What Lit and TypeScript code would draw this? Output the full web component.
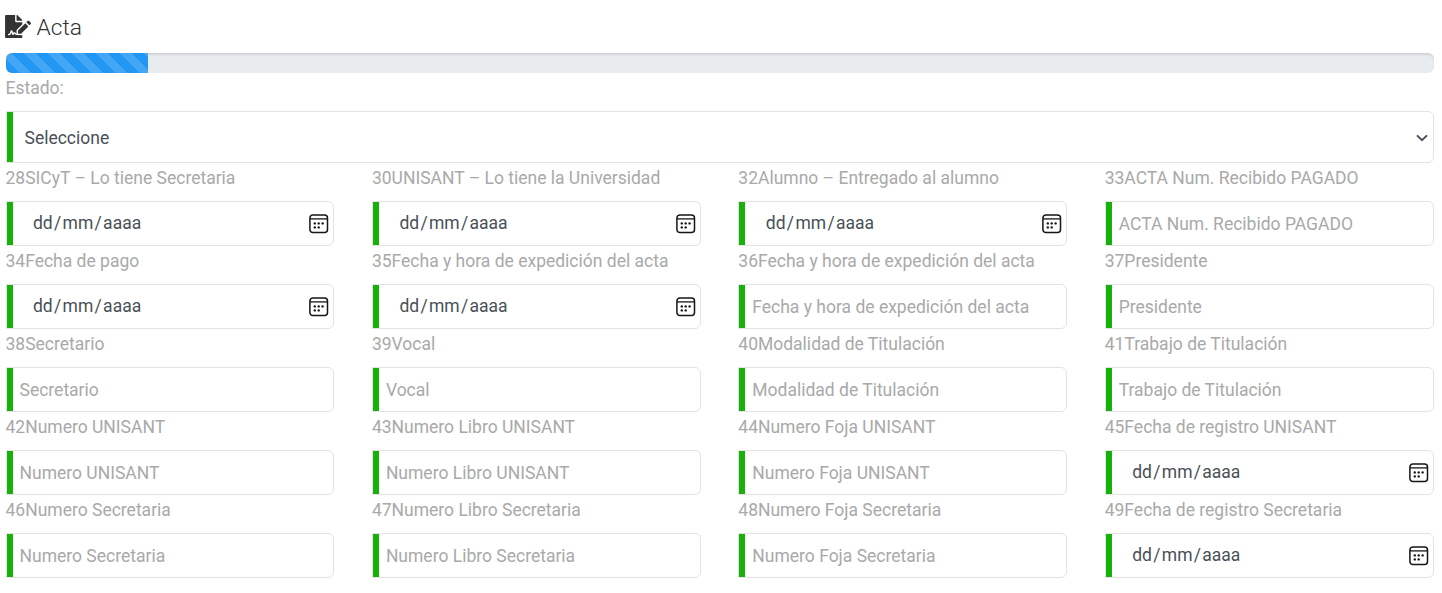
import { LitElement, html, css } from "lit";
import { customElement, property } from "lit/decorators.js";

interface Field {
  label: string;
  placeholder?: string;
}

// A field without a placeholder is a date picker.
const FIELDS: Field[] = [
  { label: "28SICyT – Lo tiene Secretaria" },
  { label: "30UNISANT – Lo tiene la Universidad" },
  { label: "32Alumno – Entregado al alumno" },
  { label: "33ACTA Num. Recibido PAGADO", placeholder: "ACTA Num. Recibido PAGADO" },
  { label: "34Fecha de pago" },
  { label: "35Fecha y hora de expedición del acta" },
  { label: "36Fecha y hora de expedición del acta", placeholder: "Fecha y hora de expedición del acta" },
  { label: "37Presidente", placeholder: "Presidente" },
  { label: "38Secretario", placeholder: "Secretario" },
  { label: "39Vocal", placeholder: "Vocal" },
  { label: "40Modalidad de Titulación", placeholder: "Modalidad de Titulación" },
  { label: "41Trabajo de Titulación", placeholder: "Trabajo de Titulación" },
  { label: "42Numero UNISANT", placeholder: "Numero UNISANT" },
  { label: "43Numero Libro UNISANT", placeholder: "Numero Libro UNISANT" },
  { label: "44Numero Foja UNISANT", placeholder: "Numero Foja UNISANT" },
  { label: "45Fecha de registro UNISANT" },
  { label: "46Numero Secretaria", placeholder: "Numero Secretaria" },
  { label: "47Numero Libro Secretaria", placeholder: "Numero Libro Secretaria" },
  { label: "48Numero Foja Secretaria", placeholder: "Numero Foja Secretaria" },
  { label: "49Fecha de registro Secretaria" },
];

@customElement("acta-field")
export class ActaField extends LitElement {
  @property() label = "";
  @property() placeholder = "";

  static styles = css`
    :host { display: block; min-width: 0; }
    .label { height: 30px; line-height: 30px; margin-bottom: 8px; color: #a9a9a9; white-space: nowrap; }
    .control {
      box-sizing: border-box;
      display: flex;
      align-items: center;
      height: 45px;
      border: 1px solid #e3e3e3;
      border-radius: 0 6px 6px 0;
      background: #fff;
    }
    .bar { align-self: stretch; width: 6px; background: #18b10c; }
    .input {
      flex: 1;
      min-width: 0;
      height: 43px;
      box-sizing: border-box;
      border: 0;
      outline: 0;
      padding: 1px 7px 0;
      background: transparent;
      font: inherit;
      color: #495057;
    }
    .input::placeholder { color: #a9a9a9; opacity: 1; }
    .date { display: flex; flex: 1; padding-left: 20.5px; color: #495057; line-height: 42px; height: 43px; }
    .sep { padding: 0 1.3px; }
    .calendar { width: 20px; height: 20px; margin: 0 4.1px 0 0; }
  `;

  render() {
    return html`
      <div class="label">${this.label}</div>
      <div class="control">
        <span class="bar"></span>
        ${this.placeholder
          ? html`<input class="input" type="text" placeholder=${this.placeholder} />`
          : html`
              <span class="date"><span>dd</span><span class="sep">/</span><span>mm</span><span class="sep">/</span><span>aaaa</span></span>
              <svg class="calendar" viewBox="0 0 20 20" fill="none" stroke="#161616">
                <rect x="0.9" y="0.9" width="17.6" height="17.6" rx="3" stroke-width="1.5" />
                <path d="M1 4.9h17.6" stroke-width="1.3" />
                <g fill="#161616" stroke="none">
                  <circle cx="5.8" cy="9.4" r="1.2" /><circle cx="9.7" cy="9.4" r="1.2" /><circle cx="13.6" cy="9.4" r="1.2" />
                  <circle cx="5.8" cy="13.4" r="1.2" /><circle cx="9.7" cy="13.4" r="1.2" />
                </g>
              </svg>`}
      </div>
    `;
  }
}

@customElement("app-root")
export class AppRoot extends LitElement {
  static styles = css`
    :host {
      display: block;
      box-sizing: border-box;
      height: 593px;
      padding: 12px 8.4px 0 5.5px;
      background: #fff;
      font: 17.5px/30px Roboto, sans-serif;
      color: #a9a9a9;
    }
    .title { display: flex; align-items: center; gap: 5.4px; height: 30px; margin: 0 0 11px -0.4px; color: #333; font-size: 22.75px; font-weight: 300; }
    .name { padding-top: 1px; }
    .sign { width: 26px; height: 23px; margin-bottom: 1px; }
    .progress { height: 20px; overflow: hidden; border-radius: 6px; background: #e9ecef; box-shadow: inset 0 2px 2px rgba(0, 0, 0, 0.1); }
    .done {
      height: 20px;
      background: #2196f3 linear-gradient(45deg, rgba(255, 255, 255, 0.15) 25%, transparent 25%, transparent 50%, rgba(255, 255, 255, 0.15) 50%, rgba(255, 255, 255, 0.15) 75%, transparent 75%, transparent) -6px 0 / 24px 24px;
    }
    .label { height: 30px; margin-bottom: 8px; }
    .select {
      box-sizing: border-box;
      display: flex;
      align-items: center;
      height: 52px;
      border: 1px solid #e3e3e3;
      border-radius: 0 6px 6px 0;
      color: #495057;
    }
    .bar { align-self: stretch; width: 6px; background: #18b10c; }
    .value { flex: 1; padding: 2px 0 0 12px; }
    .chevron { width: 12px; height: 8px; margin: 1px 5px 0 0; }
    .grid { display: grid; grid-template-columns: repeat(4, 1fr); column-gap: 37.5px; }
  `;

  private progress = 9.95;

  render() {
    return html`
      <div class="title">
        <svg class="sign" viewBox="0 0 576 512" fill="#333">
          <path d="M218.17 424.14c-2.95-5.92-8.09-6.52-10.17-6.52s-7.22.59-10.02 6.19l-7.67 15.34c-6.37 12.78-25.03 11.37-29.48-2.09L144 386.59l-10.61 31.88c-5.89 17.66-22.38 29.53-41 29.53H80c-8.84 0-16-7.16-16-16s7.16-16 16-16h12.39c4.83 0 9.11-3.08 10.64-7.66l18.19-54.64c3.3-9.81 12.44-16.41 22.78-16.41s19.48 6.59 22.77 16.41l13.88 41.64c19.75-16.19 54.06-9.7 66 14.16 1.89 3.78 5.49 5.95 9.36 6.26v-82.12l128-127.09V160H248c-13.2 0-24-10.8-24-24V0H24C10.7 0 0 10.7 0 24v464c0 13.3 10.7 24 24 24h336c13.3 0 24-10.7 24-24v-40l-128-.11c-16.12-.31-30.58-9.28-37.83-23.75zM384 121.9c0-6.3-2.5-12.4-7-16.9L279.1 7c-4.5-4.5-10.6-7-17-7H256v128h128v-6.1zm-96 225.06V416h68.99l161.68-162.78-67.88-67.88L288 346.96zm280.54-179.63l-31.87-31.87c-9.94-9.94-26.07-9.94-36.01 0l-27.25 27.25 67.88 67.88 27.25-27.25c9.95-9.94 9.95-26.07 0-36.01z" />
        </svg>
        <span class="name">Acta</span>
      </div>
      <div class="progress"><div class="done" style="width:${this.progress}%"></div></div>
      <div class="label">Estado:</div>
      <div class="select">
        <span class="bar"></span>
        <span class="value">Seleccione</span>
        <svg class="chevron" viewBox="0 0 12 8" fill="none" stroke="#495057" stroke-width="2"><path d="M1 1.4l5 4.8 5-4.8" /></svg>
      </div>
      <div class="grid">
        ${FIELDS.map((f) => html`<acta-field .label=${f.label} .placeholder=${f.placeholder ?? ""}></acta-field>`)}
      </div>
    `;
  }
}
